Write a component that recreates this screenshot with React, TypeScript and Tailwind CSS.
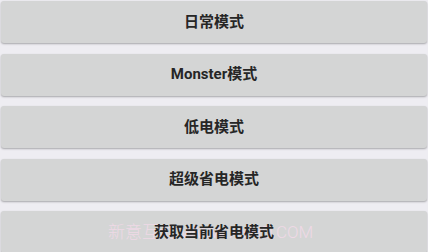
import React from "react";

const labels = ["日常模式", "Monster模式", "低电模式", "超级省电模式"];

export default function App() {
  return (
    <div
      className="relative w-[428px] h-[252px] overflow-hidden bg-[#eeedf2] flex flex-col gap-[10.5px] px-[1px] pt-[1px]"
      style={{ fontFamily: '"Roboto", "Noto Sans CJK SC", sans-serif' }}
    >
      {labels.map((l) => (
        <button
          key={l}
          className="h-[42px] shrink-0 w-full rounded-[3px] bg-[#d4d5d5] shadow-[0_1px_2px_rgba(0,0,0,0.3)] text-[15px] font-bold text-[#262626] flex items-center justify-center"
        >
          {l}
        </button>
      ))}
      <button className="relative h-[42px] shrink-0 w-full rounded-[3px] bg-[#d4d5d5] shadow-[0_1px_2px_rgba(0,0,0,0.3)] text-[15px] font-bold text-[#262626] flex items-center justify-center">
        <span className="absolute left-[107px] top-[9px] text-[17px] font-light text-[#efd9e6] whitespace-nowrap">
          新意互动 WWW.XYHD.COM
        </span>
        <span className="relative">获取当前省电模式</span>
      </button>
    </div>
  );
}
